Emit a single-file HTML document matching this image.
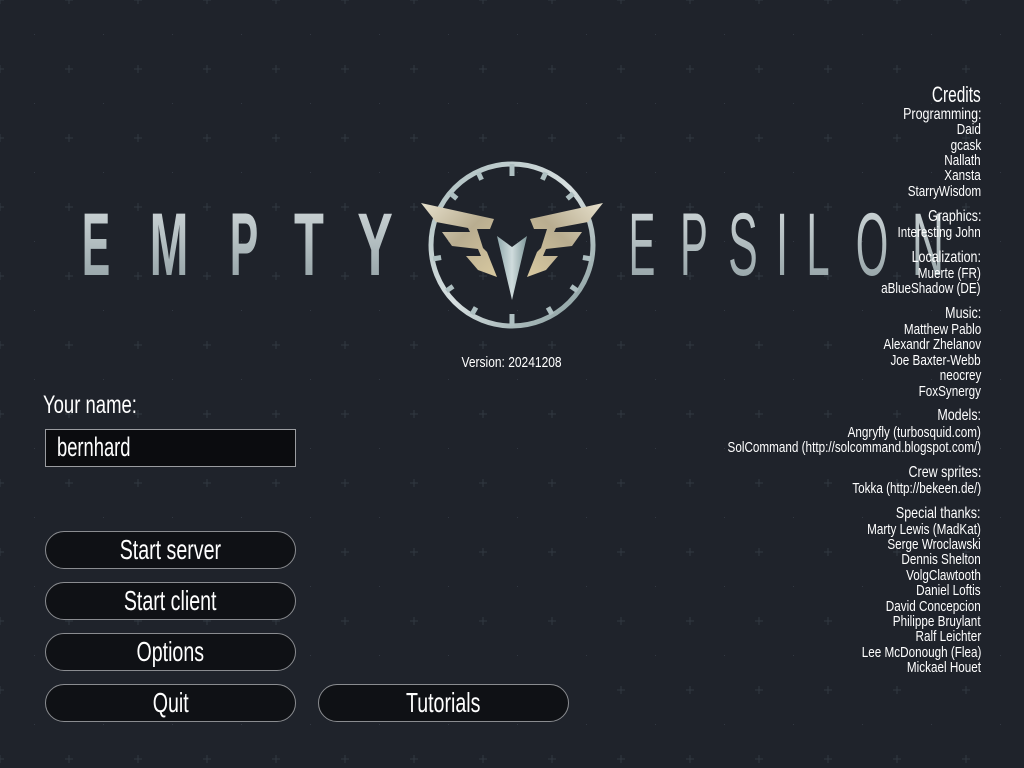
<!DOCTYPE html>
<html><head><meta charset="utf-8">
<style>
html,body{margin:0;padding:0;}
body{width:1024px;height:768px;position:relative;overflow:hidden;background:#1f232b;font-family:"Liberation Sans",sans-serif;color:#fff;}
.bg{position:absolute;left:0;top:0;}
.l{position:absolute;white-space:nowrap;}
.s{display:inline-block;}
.cr{position:absolute;right:43px;height:18px;line-height:18px;font-size:15px;white-space:nowrap;transform:scaleX(.78);transform-origin:right center;color:#fff;}
.ch{font-size:16px;}
.btn{position:absolute;width:249px;height:36px;border:1.5px solid #8a8c90;border-radius:19px;background:#0f1115;text-align:center;line-height:36px;font-size:28px;}
.btn span{display:inline-block;transform:scaleX(.7);}
.big{position:absolute;top:196px;font-size:89px;line-height:96px;width:80px;margin-left:-40px;text-align:center;
 background:linear-gradient(#d3dadc,#8f9ea2);-webkit-background-clip:text;background-clip:text;color:transparent;}
</style></head><body>
<svg class="bg" width="1024" height="768">
<defs>
<pattern id="g" width="69" height="69" patternUnits="userSpaceOnUse">
<path d="M0 -4V4M-4 0H4M69 -4V4M65 0H73M0 65V73M-4 69H4M69 65V73M65 69H73" stroke="#323842" stroke-width="1"/>
<rect x="34" y="34" width="1" height="1" fill="#323842"/>
</pattern>
<linearGradient id="ring" x1="0" y1="0" x2="1" y2="1"><stop offset="0" stop-color="#a9bcbd"/><stop offset=".5" stop-color="#d7dfe0"/><stop offset="1" stop-color="#7f9697"/></linearGradient>
<linearGradient id="gold" x1="0" y1="0" x2="1" y2="1"><stop offset="0" stop-color="#e6e0cc"/><stop offset=".5" stop-color="#b9ad90"/><stop offset="1" stop-color="#d8c9a0"/></linearGradient>
<linearGradient id="dart" x1="0" y1="0" x2="1" y2="0"><stop offset="0" stop-color="#8fa8ab"/><stop offset=".5" stop-color="#d0dcdd"/><stop offset="1" stop-color="#7e9799"/></linearGradient>
</defs>
<rect width="1024" height="768" fill="url(#g)"/>
<g>
<circle cx="512" cy="245" r="81" fill="none" stroke="url(#ring)" stroke-width="5"/>
<g stroke="#aebfc1" stroke-width="5">
<line x1="512" y1="164" x2="512" y2="176"/>
<line x1="512" y1="326" x2="512" y2="314"/>
<g id="tk"><line x1="512" y1="165" x2="512" y2="173"/></g>
<use href="#tk" transform="rotate(25 512 245)"/><use href="#tk" transform="rotate(-25 512 245)"/>
<use href="#tk" transform="rotate(50 512 245)"/><use href="#tk" transform="rotate(-50 512 245)"/>
<use href="#tk" transform="rotate(100 512 245)"/><use href="#tk" transform="rotate(-100 512 245)"/>
<use href="#tk" transform="rotate(125 512 245)"/><use href="#tk" transform="rotate(-125 512 245)"/>
<use href="#tk" transform="rotate(150 512 245)"/><use href="#tk" transform="rotate(-150 512 245)"/>
</g>
<g id="wing"><polygon fill="url(#gold)" points="421,203 494,219 490,229 477,229 483,248 487,252 497,277 478,270 466,256 481,256 478,249 452,246 442,232 470,232 468,228 436,222"/></g>
<use href="#wing" transform="translate(1024 0) scale(-1 1)"/>
<polygon fill="url(#dart)" points="497,236 512,247 527,236 512,300"/>
</g>
</svg>

<div class="big" style="left:96px;font-weight:bold;transform:scaleX(.48)">E</div>
<div class="big" style="left:169px;font-weight:bold;transform:scaleX(.52)">M</div>
<div class="big" style="left:244px;font-weight:bold;transform:scaleX(.48)">P</div>
<div class="big" style="left:309px;font-weight:bold;transform:scaleX(.55)">T</div>
<div class="big" style="left:375px;font-weight:bold;transform:scaleX(.6)">Y</div>

<div class="big" style="left:642px;transform:scaleX(.45)">E</div>
<div class="big" style="left:694px;transform:scaleX(.47)">P</div>
<div class="big" style="left:743px;transform:scaleX(.5)">S</div>
<div class="big" style="left:782px;transform:scaleX(.5)">I</div>
<div class="big" style="left:818px;transform:scaleX(.47)">L</div>
<div class="big" style="left:872px;transform:scaleX(.47)">O</div>
<div class="big" style="left:928px;transform:scaleX(.5)">N</div>

<div class="l" style="left:412px;width:200px;top:354px;text-align:center;font-size:15px;line-height:18px;"><span class="s" style="transform:scaleX(.8)">Version: 20241208</span></div>

<div class="l" style="left:43px;top:391px;font-size:25px;line-height:28px;transform:scaleX(.74);transform-origin:left center;">Your name:</div>
<div style="position:absolute;left:45px;top:429px;width:249px;height:36px;border:1.5px solid #9a9ca0;background:#0b0c0f;"></div>
<div class="l" style="left:57px;top:432px;font-size:27px;line-height:30px;transform:scaleX(.68);transform-origin:left center;">bernhard</div>

<div class="btn" style="left:45px;top:531px;"><span>Start server</span></div>
<div class="btn" style="left:45px;top:582px;"><span>Start client</span></div>
<div class="btn" style="left:45px;top:633px;"><span>Options</span></div>
<div class="btn" style="left:45px;top:684px;"><span>Quit</span></div>
<div class="btn" style="left:318px;top:684px;"><span>Tutorials</span></div>

<div class="cr" style="top:84px;font-size:22px;height:22px;line-height:22px;transform:scaleX(.7)">Credits</div>
<div class="cr ch" style="top:106px">Programming:</div>
<div class="cr" style="top:121px">Daid</div>
<div class="cr" style="top:137px">gcask</div>
<div class="cr" style="top:152px">Nallath</div>
<div class="cr" style="top:167px">Xansta</div>
<div class="cr" style="top:183px">StarryWisdom</div>
<div class="cr ch" style="top:208px">Graphics:</div>
<div class="cr" style="top:224px">Interesting John</div>
<div class="cr ch" style="top:249px">Localization:</div>
<div class="cr" style="top:265px">Muerte (FR)</div>
<div class="cr" style="top:280px">aBlueShadow (DE)</div>
<div class="cr ch" style="top:305px">Music:</div>
<div class="cr" style="top:321px">Matthew Pablo</div>
<div class="cr" style="top:336px">Alexandr Zhelanov</div>
<div class="cr" style="top:352px">Joe Baxter-Webb</div>
<div class="cr" style="top:367px">neocrey</div>
<div class="cr" style="top:383px">FoxSynergy</div>
<div class="cr ch" style="top:407px">Models:</div>
<div class="cr" style="top:424px">Angryfly (turbosquid.com)</div>
<div class="cr" style="top:439px">SolCommand (http://solcommand.blogspot.com/)</div>
<div class="cr ch" style="top:464px">Crew sprites:</div>
<div class="cr" style="top:480px">Tokka (http://bekeen.de/)</div>
<div class="cr ch" style="top:505px">Special thanks:</div>
<div class="cr" style="top:521px">Marty Lewis (MadKat)</div>
<div class="cr" style="top:536px">Serge Wroclawski</div>
<div class="cr" style="top:551px">Dennis Shelton</div>
<div class="cr" style="top:567px">VolgClawtooth</div>
<div class="cr" style="top:582px">Daniel Loftis</div>
<div class="cr" style="top:598px">David Concepcion</div>
<div class="cr" style="top:613px">Philippe Bruylant</div>
<div class="cr" style="top:628px">Ralf Leichter</div>
<div class="cr" style="top:644px">Lee McDonough (Flea)</div>
<div class="cr" style="top:659px">Mickael Houet</div>
</body></html>
